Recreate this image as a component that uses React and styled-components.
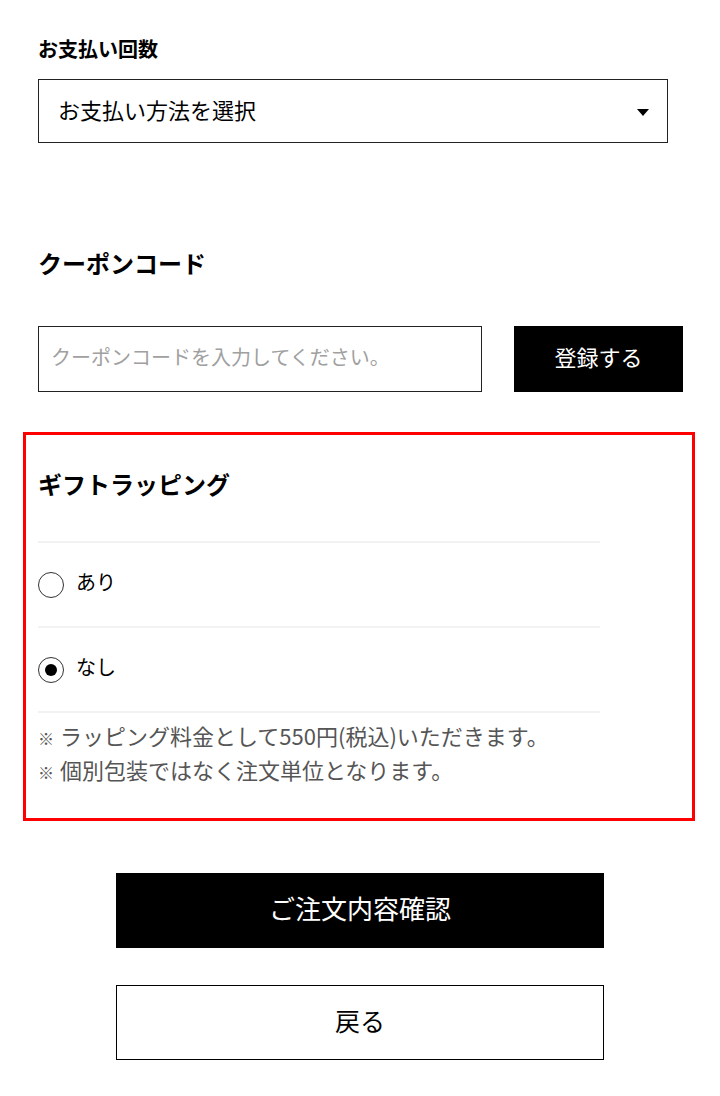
import React from "react";
import styled, { createGlobalStyle } from "styled-components";

const GlobalStyle = createGlobalStyle`
  html, body { margin: 0; padding: 0; background: #fff; }
  body {
    font-family: "Noto Sans CJK JP", "Noto Sans", sans-serif;
    color: #000;
  }
  * { box-sizing: border-box; }
`;

const Page = styled.div`
  width: 720px;
  padding: 35px 0 40px 38px;
  display: flex;
  flex-direction: column;
`;

const Label = styled.div`
  font-size: 20px;
  line-height: 28px;
  font-weight: 700;
`;

const Heading = styled.h2`
  margin: ${(p) => p.$mt || 0}px 0 0;
  font-size: 24px;
  line-height: 34px;
  font-weight: 700;
`;

const Select = styled.div`
  margin-top: 16px;
  width: 630px;
  height: 64px;
  border: 1px solid #222;
  display: flex;
  align-items: center;
  justify-content: space-between;
  padding: 0 18px 4px 19px;
  font-size: 22px;
`;

const Caret = styled.span`
  width: 0;
  height: 0;
  border-left: 6.5px solid transparent;
  border-right: 6.5px solid transparent;
  border-top: 7px solid #000;
  margin-top: 7px;
`;

const CouponRow = styled.div`
  margin-top: 46px;
  display: flex;
  gap: 32px;
`;

const Input = styled.div`
  width: 444px;
  height: 66px;
  border: 1px solid #222;
  display: flex;
  align-items: center;
  padding: 0 0 5px 12px;
  font-size: 20px;
  color: #a0a0a0;
`;

const Button = styled.div`
  width: ${(p) => p.$w}px;
  height: ${(p) => p.$h}px;
  margin-top: ${(p) => p.$mt || 0}px;
  margin-left: ${(p) => p.$ml || 0}px;
  display: flex;
  align-items: center;
  justify-content: center;
  padding-bottom: 6px;
  background: ${(p) => (p.$outline ? "#fff" : "#000")};
  color: ${(p) => (p.$outline ? "#000" : "#fff")};
  border: 1px solid #000;
  font-size: ${(p) => p.$fs}px;
`;

const GiftBox = styled.section`
  margin: 40px 0 0 -15px;
  width: 672px;
  border: 3px solid #ff0000;
  padding: 32px 0 32px 12px;
`;

const Divider = styled.div`
  width: 562px;
  height: 2px;
  background: #f2f2f2;
  margin-top: ${(p) => p.$mt || 0}px;
`;

const RadioRow = styled.label`
  height: 83px;
  display: flex;
  align-items: center;
  gap: 12px;
  font-size: 20px;
`;

const RadioText = styled.span`
  padding-bottom: 6px;
`;

const RadioCircle = styled.span`
  width: 26px;
  height: 26px;
  border-radius: 50%;
  border: 1.5px solid #333;
  display: flex;
  align-items: center;
  justify-content: center;
  &::after {
    content: "";
    width: 12px;
    height: 12px;
    border-radius: 50%;
    background: ${(p) => (p.$checked ? "#000" : "transparent")};
  }
`;

const Notes = styled.div`
  margin-top: 5px;
  font-size: 22px;
  line-height: 34px;
  color: #555;
`;

const Mark = styled.span`
  font-size: 16px;
  line-height: 1;
  margin-right: 6px;
`;

export default function App() {
  return (
    <>
      <GlobalStyle />
      <Page>
        <Label>お支払い回数</Label>
        <Select>
          <span>お支払い方法を選択</span>
          <Caret />
        </Select>

        <Heading $mt={103}>クーポンコード</Heading>
        <CouponRow>
          <Input>クーポンコードを入力してください。</Input>
          <Button $w={169} $h={66} $fs={22}>登録する</Button>
        </CouponRow>

        <GiftBox>
          <Heading>ギフトラッピング</Heading>
          <Divider $mt={40} />
          <RadioRow>
            <RadioCircle />
            <RadioText>あり</RadioText>
          </RadioRow>
          <Divider />
          <RadioRow>
            <RadioCircle $checked />
            <RadioText>なし</RadioText>
          </RadioRow>
          <Divider />
          <Notes>
            <div><Mark>※</Mark>ラッピング料金として550円(税込)いただきます。</div>
            <div><Mark>※</Mark>個別包装ではなく注文単位となります。</div>
          </Notes>
        </GiftBox>

        <Button $w={488} $h={75} $fs={26} $mt={52} $ml={78}>ご注文内容確認</Button>
        <Button $w={488} $h={75} $fs={25} $mt={37} $ml={78} $outline>戻る</Button>
      </Page>
    </>
  );
}
